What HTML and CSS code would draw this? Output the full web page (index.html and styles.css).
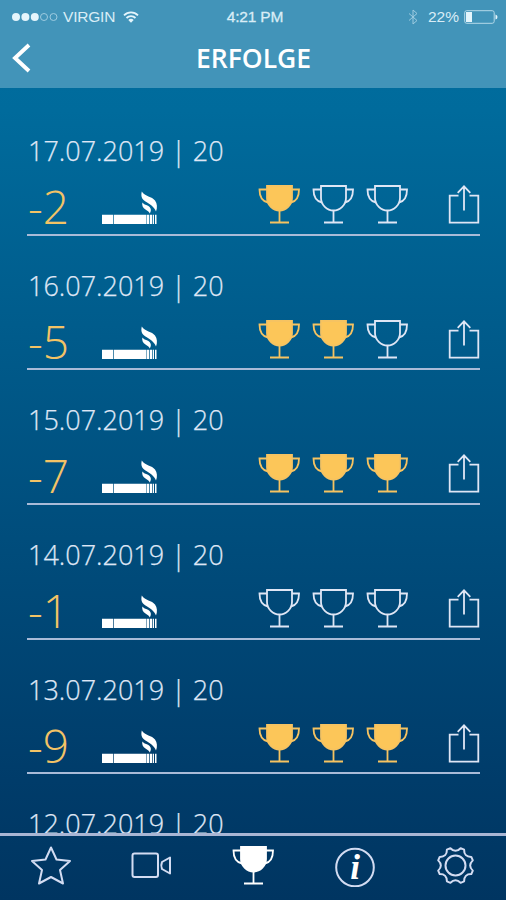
FILE: index.html
```html
<!DOCTYPE html>
<html lang="de">
<head>
    <meta charset="UTF-8">
    <meta name="viewport" content="width=device-width, initial-scale=1.0">
    <title>Erfolge</title>
    <link rel="stylesheet" href="styles.css">
</head>
<body>
    <svg class="sprite">
        <symbol id="cup" viewBox="0 0 42 40">
            <path class="bowl" d="M9 2H34V14C34 21 28 26.500 21.500 26.500S9 21 9 14Z"/>
            <path class="line" d="M9 5.500H1.500C1.500 12 3 17 10 18.500M34 5.500H41C41 12 39.500 17 33 18.500M21.500 26.500V38.500M12 38.500H31"/>
        </symbol>
        <symbol id="cigarette" viewBox="0 0 56 34">
            <path d="M0 23.700H11V33H0ZM11.700 23.700H44.500V33H11.700ZM45 23.700H47.300V33H45ZM48 23.700H50V33H48ZM50.700 23.700H52V33H50.700ZM53 23.700H54.500V33H53Z"/>
            <path d="M39.800 .5C38.800 5 39.500 8 43.500 10.500C48 13.500 51.500 15 54 20.500C55.500 17 55.300 12.500 53 9.500C50 5.500 43 5.500 39.800 .5Z"/>
            <path d="M40.300 11.500C39.800 15 41 17 43.500 18.500C45.500 19.800 47 20.500 47.800 22.500C49.800 19.500 49 16.500 46 14.800C43.500 13.800 41.500 13.200 40.300 11.500Z"/>
        </symbol>
        <symbol id="share" viewBox="0 0 32 40">
            <path d="M10.500 11.700H1.700V38.700H30.300V11.700H21.500M16 26.500V2.500M9.700 8.800L16 2.300L22.300 8.800"/>
        </symbol>
    </svg>

    <div class="app">
        <header class="header">
            <div class="status">
                <div class="carrier">
                    <svg class="signal" viewBox="0 0 46 10">
                        <circle class="on" cx="4" cy="5" r="4"/>
                        <circle class="on" cx="13.400" cy="5" r="4"/>
                        <circle class="on" cx="22.800" cy="5" r="4"/>
                        <circle class="off" cx="32" cy="5" r="3.500"/>
                        <circle class="off" cx="41.500" cy="5" r="3.500"/>
                    </svg>
                    <span class="carrier-name">VIRGIN</span>
                    <svg class="wifi" viewBox="0 0 16 12">
                        <path d="M1 4.300C5 .3 11 .3 15 4.300M3.500 7C6 4.500 10 4.500 12.500 7"/>
                        <path class="dot" d="M5.300 9Q8 6.700 10.700 9L8 11.700Z"/>
                    </svg>
                </div>
                <span class="time">4:21 PM</span>
                <div class="power">
                    <svg class="bluetooth" viewBox="0 0 10 16"><path d="M1 4.500L9 11.500L5 15V1L9 4.500L1 11.500"/></svg>
                    <span>22%</span>
                    <svg class="battery" viewBox="0 0 34 14">
                        <rect class="case" x=".7" y=".7" width="29.500" height="12.600" rx="2"/>
                        <rect class="charge" x="2" y="2" width="6" height="10"/>
                        <path class="charge" d="M31.500 4.500Q33.500 5 33.500 7T31.500 9.500Z"/>
                    </svg>
                </div>
            </div>
            <div class="titlebar">
                <svg class="back" viewBox="0 0 20 30"><path d="M17 2L3 15L17 28"/></svg>
                <h1>ERFOLGE</h1>
            </div>
        </header>

        <main class="list">
            <div class="entry">
                <div class="date">17.07.2019 | 20</div>
                <div class="result">
                    <span class="count">-2</span>
                    <svg class="cigarette"><use href="#cigarette"/></svg>
                    <div class="cups">
                        <svg class="cup won"><use href="#cup"/></svg>
                        <svg class="cup"><use href="#cup"/></svg>
                        <svg class="cup"><use href="#cup"/></svg>
                    </div>
                    <svg class="share"><use href="#share"/></svg>
                </div>
            </div>
            <div class="entry">
                <div class="date">16.07.2019 | 20</div>
                <div class="result">
                    <span class="count">-5</span>
                    <svg class="cigarette"><use href="#cigarette"/></svg>
                    <div class="cups">
                        <svg class="cup won"><use href="#cup"/></svg>
                        <svg class="cup won"><use href="#cup"/></svg>
                        <svg class="cup"><use href="#cup"/></svg>
                    </div>
                    <svg class="share"><use href="#share"/></svg>
                </div>
            </div>
            <div class="entry">
                <div class="date">15.07.2019 | 20</div>
                <div class="result">
                    <span class="count">-7</span>
                    <svg class="cigarette"><use href="#cigarette"/></svg>
                    <div class="cups">
                        <svg class="cup won"><use href="#cup"/></svg>
                        <svg class="cup won"><use href="#cup"/></svg>
                        <svg class="cup won"><use href="#cup"/></svg>
                    </div>
                    <svg class="share"><use href="#share"/></svg>
                </div>
            </div>
            <div class="entry">
                <div class="date">14.07.2019 | 20</div>
                <div class="result">
                    <span class="count">-1</span>
                    <svg class="cigarette"><use href="#cigarette"/></svg>
                    <div class="cups">
                        <svg class="cup"><use href="#cup"/></svg>
                        <svg class="cup"><use href="#cup"/></svg>
                        <svg class="cup"><use href="#cup"/></svg>
                    </div>
                    <svg class="share"><use href="#share"/></svg>
                </div>
            </div>
            <div class="entry">
                <div class="date">13.07.2019 | 20</div>
                <div class="result">
                    <span class="count">-9</span>
                    <svg class="cigarette"><use href="#cigarette"/></svg>
                    <div class="cups">
                        <svg class="cup won"><use href="#cup"/></svg>
                        <svg class="cup won"><use href="#cup"/></svg>
                        <svg class="cup won"><use href="#cup"/></svg>
                    </div>
                    <svg class="share"><use href="#share"/></svg>
                </div>
            </div>
            <div class="entry">
                <div class="date">12.07.2019 | 20</div>
            </div>
        </main>

        <nav class="tabs">
            <a class="tab"><svg class="icon" viewBox="0 0 42 42"><path d="M21 2.500L26.500 14.500L40 16L30 25L33 38.500L21 32L9 38.500L12 25L2 16L15.500 14.500Z"/></svg></a>
            <a class="tab"><svg class="icon" viewBox="0 0 42 42"><rect x="1.500" y="8.500" width="25.500" height="23.500" rx="2"/><path d="M39 12.500V28.500L31 24Q29.500 20.500 31 17Z"/></svg></a>
            <a class="tab"><svg class="cup active"><use href="#cup"/></svg></a>
            <a class="tab"><svg class="icon info" viewBox="0 0 42 42"><circle cx="22" cy="22.500" r="18.800"/><text x="22" y="34">i</text></svg></a>
            <a class="tab"><svg class="icon" viewBox="0 0 42 42"><circle cx="21.500" cy="20.500" r="10"/><path d="M38.800 25.600L37.300 29.100Q30 29 30.100 36.300L26.600 37.800Q21.500 32.500 16.400 37.800L12.900 36.300Q13 29 5.700 29.100L4.200 25.600Q9.500 20.500 4.200 15.400L5.700 11.900Q13 12 12.900 4.700L16.400 3.200Q21.500 8.500 26.600 3.200L30.100 4.700Q30 12 37.300 11.900L38.800 15.400Q33.500 20.500 38.800 25.600Z"/></svg></a>
        </nav>
    </div>
</body>
</html>
```
FILE: styles.css
```css
* {
    box-sizing: border-box;
}
body {
    margin: 0;
    font-family: "Open Sans", sans-serif;
    color: #dfe6f5;
}
svg {
    display: block;
    flex: none;
}
.sprite {
    width: 0;
    height: 0;
    position: absolute;
}
.app {
    height: 900px;
    display: flex;
    flex-direction: column;
    background: linear-gradient(#006fa0 0, #006b9c 110px, #003c6a 780px, #003561 900px);
    overflow: hidden;
}

/* header */
.header {
    height: 88px;
    flex: none;
    background: #4294b9;
}
.status {
    height: 34px;
    padding: 0 8px 0 12px;
    display: grid;
    grid-template-columns: 1fr auto 1fr;
    align-items: center;
    font-family: "Liberation Sans", Arial, sans-serif;
    font-size: 15.500px;
    color: #d9edf6;
}
.carrier, .power {
    display: flex;
    align-items: center;
}
.signal {
    width: 46px;
    height: 10px;
}
.signal .on {
    fill: #e4f5fc;
}
.signal .off {
    fill: none;
    stroke: #9dcbe0;
}
.carrier-name {
    margin: 0 8px 0 5px;
    letter-spacing: -0.200px;
}
.wifi {
    width: 16px;
    height: 12px;
    fill: none;
    stroke: #e4f5fc;
    stroke-width: 1.800;
}
.wifi .dot {
    fill: #e4f5fc;
    stroke: none;
}
.time {
    letter-spacing: -0.200px;
    -webkit-text-stroke: 0.300px;
}
.power {
    justify-content: flex-end;
}
.bluetooth {
    width: 10px;
    height: 16px;
    margin-right: 10px;
    fill: none;
    stroke: #9dcbe0;
}
.battery {
    width: 34px;
    height: 14px;
    margin-left: 5px;
}
.case {
    fill: none;
    stroke: #b4d9e9;
}
.charge {
    fill: #e4f5fc;
}
.titlebar {
    height: 48px;
    display: grid;
    grid-template-columns: 40px 1fr 40px;
    align-items: center;
}
.back {
    width: 20px;
    height: 30px;
    margin-left: 12px;
    fill: none;
    stroke: white;
    stroke-width: 3.900;
}
h1 {
    margin: 0;
    padding-left: 1px;
    font-size: 26.500px;
    font-weight: 600;
    line-height: 46px;
    text-align: center;
    color: white;
}

/* list of days */
.list {
    flex: 1;
    min-height: 0;
    padding: 13px 26px 0 27px;
    overflow: hidden;
}
.entry {
    height: 134.700px;
    padding-top: 30px;
    border-bottom: 2px solid #a9bbd8;
}
.date {
    padding-left: 1px;
    font-size: 27px;
    font-weight: 300;
    line-height: 40px;
    -webkit-text-stroke: 0.250px;
}
.result {
    height: 62px;
    padding-top: 12px;
    display: flex;
    align-items: flex-start;
}
.count {
    width: 75px;
    padding-left: 1px;
    font-size: 46px;
    font-weight: 300;
    line-height: 46px;
    color: #f3c366;
}
.cigarette {
    width: 56px;
    height: 34px;
    margin-top: 8px;
    fill: white;
}
.cups {
    margin: 1px 0 0 100px;
    display: flex;
    gap: 12px;
}
.cup {
    width: 42px;
    height: 40px;
    fill: none;
    stroke: #dfe6f5;
    stroke-width: 1.800;
}
.cup.won {
    fill: #fcc659;
    stroke: #f6c361;
}
.line {
    fill: none;
}
.share {
    width: 32px;
    height: 40px;
    margin: 1px 0 0 auto;
    fill: none;
    stroke: #dfe6f5;
    stroke-width: 1.800;
}

/* bottom bar */
.tabs {
    height: 67px;
    flex: none;
    display: grid;
    grid-template-columns: repeat(5, 1fr);
    border-top: 3px solid #a9b6d4;
}
.tab {
    display: flex;
    justify-content: center;
    padding-top: 9px;
}
.icon {
    width: 42px;
    height: 42px;
    fill: none;
    stroke: #d3dcf2;
    stroke-width: 2;
    stroke-linejoin: round;
}
.info text {
    font-family: "Liberation Serif", serif;
    font-size: 35px;
    font-style: italic;
    font-weight: bold;
    text-anchor: middle;
    fill: white;
    stroke: none;
}
.cup.active {
    fill: white;
    stroke: white;
}
```
